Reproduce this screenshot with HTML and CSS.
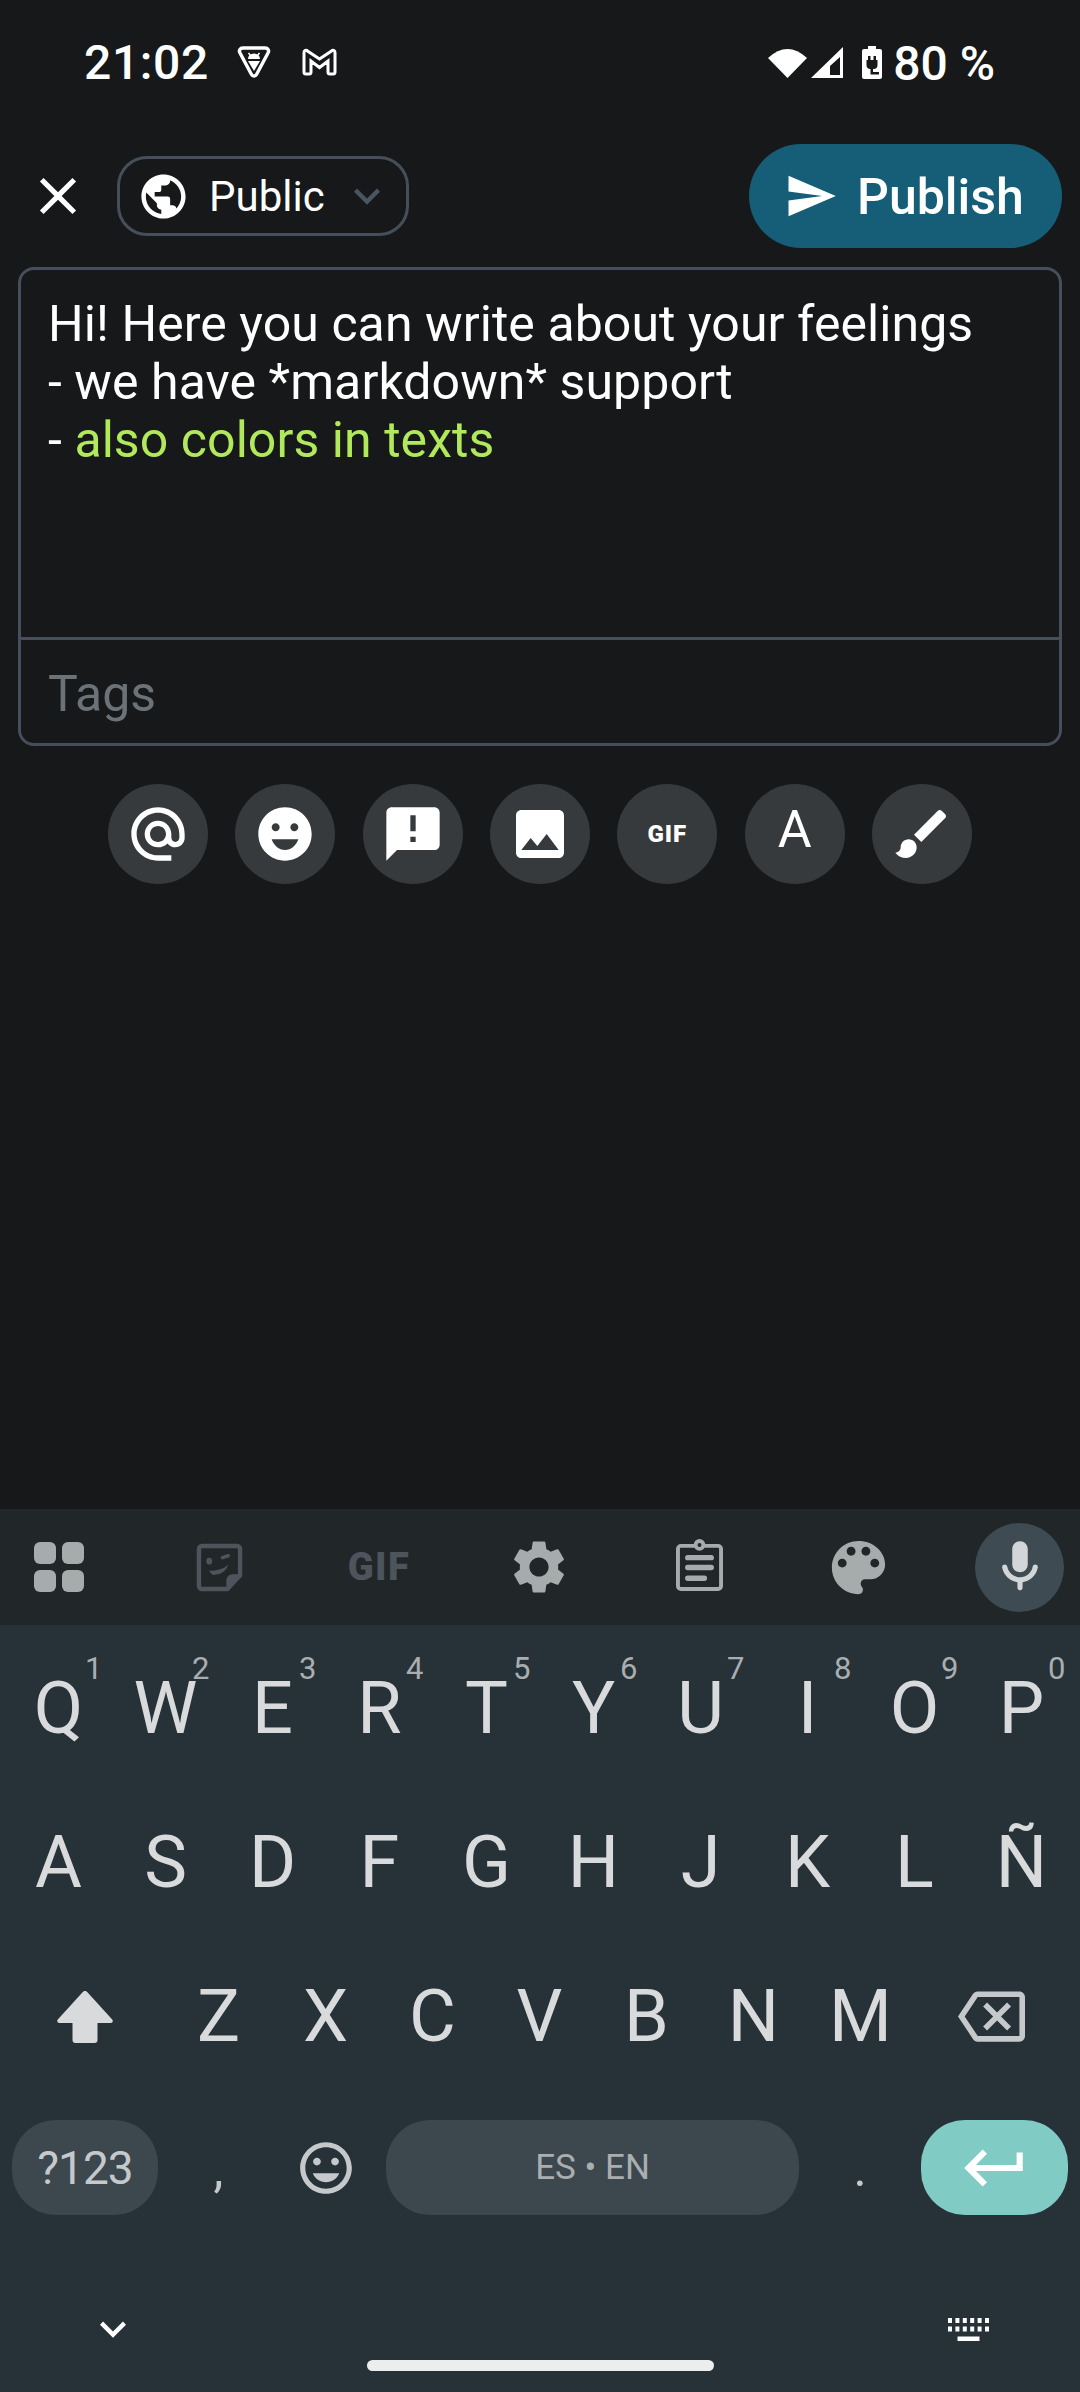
FILE: index.html
```html
<!DOCTYPE html>
<html lang="en">
<head>
  <meta charset="UTF-8" />
  <meta name="viewport" content="width=device-width, initial-scale=1.0" />
  <title>New post</title>
  <link rel="stylesheet" href="styles.css">
</head>
<body>
  <div class="screen">
    <main class="compose">
      <div class="status-bar">
        <span class="clock">21:02</span>
        <svg class="st-shield" viewBox="0 0 34 34"><path d="M6 3H28C31 3 32.500 5.500 31 8L19.500 29.500C18.500 31.500 15.500 31.500 14.500 29.500L3 8C1.500 5.500 3 3 6 3Z" fill="none" stroke="#fff" stroke-width="3.400" stroke-linejoin="round"/><path d="M11 14a6 5.500 0 0 1 12 0ZM11 16H23L17 26Z" fill="#fff"/><path d="M11.500 8l2 2.500M22.500 8l-2 2.500" stroke="#fff" stroke-width="1.500"/></svg>
        <svg class="st-mail" viewBox="0 0 35 28"><path d="M2 4.500a2 2 0 0 1 3.500-1.500L17.500 11 29.500 3a2 2 0 0 1 3.500 1.500V24a2 2 0 0 1-2 2H28a2 2 0 0 1-2-2V13l-8.500 6.500L9 13V24a2 2 0 0 1-2 2H4a2 2 0 0 1-2-2Z" fill="none" stroke="#fff" stroke-width="3"/></svg>
        <span class="status-spacer"></span>
        <svg class="st-wifi" viewBox="0 0 39 31"><path d="M0 11Q19.500-7 39 11L19.500 31Z" fill="#fff"/></svg>
        <svg class="st-signal" viewBox="0 0 32 31"><path d="M32 0V31H0ZM29 10 19 19V28H29Z" fill="#fff" fill-rule="evenodd"/></svg>
        <svg class="st-battery" viewBox="0 0 20 33"><path d="M6 0H14V3H18a2 2 0 0 1 2 2V31a2 2 0 0 1-2 2H2a2 2 0 0 1-2-2V5a2 2 0 0 1 2-2H6Z" fill="#fff"/><path d="M6 10H8.500V14H11.500V10H14V14H15.500V19a4 4 0 0 1-4 4H11V26H17V28.500H8.500V23a4 4 0 0 1-4-4V14H6Z" fill="#16181a"/></svg>
        <span class="battery-text">80 %</span>
      </div>

      <div class="top-bar">
        <svg class="close-icon" viewBox="0 0 24 24"><path d="M19 6.410L17.590 5 12 10.590 6.410 5 5 6.410 10.590 12 5 17.590 6.410 19 12 13.410 17.590 19 19 17.590 13.410 12z"/></svg>
        <div class="visibility">
          <svg class="globe-icon" viewBox="0 0 24 24"><path d="M12 2C6.480 2 2 6.480 2 12s4.480 10 10 10 10-4.480 10-10S17.520 2 12 2zm-1 17.930c-3.950-.490-7-3.850-7-7.930 0-.620.080-1.210.210-1.790L9 15v1c0 1.100.900 2 2 2v1.930zm6.900-2.540c-.260-.810-1-1.390-1.900-1.390h-1v-3c0-.550-.450-1-1-1H8v-2h2c.550 0 1-.450 1-1V7h2c1.100 0 2-.900 2-2v-.410c2.930 1.190 5 4.060 5 7.410 0 2.080-.800 3.970-2.100 5.390z"/></svg>
          <span class="visibility-label">Public</span>
          <svg class="caret-icon" viewBox="0 0 24 24"><path d="M16.590 8.590L12 13.170 7.410 8.590 6 10l6 6 6-6z"/></svg>
        </div>
        <button class="publish">
          <svg class="send-icon" viewBox="0 0 24 24"><path d="M2.010 21L23 12 2.010 3 2 10l15 2-15 2z"/></svg>
          <span>Publish</span>
        </button>
      </div>

      <div class="editor">
        <div class="editor-text">
          <div>Hi! Here you can write about your feelings</div>
          <div>- we have *markdown* support</div>
          <div>- <span class="lime">also colors in texts</span></div>
        </div>
        <div class="editor-tags">Tags</div>
      </div>

      <div class="tools">
        <div class="tool"><svg viewBox="0 0 24 24"><path d="M12 2C6.480 2 2 6.480 2 12s4.480 10 10 10h5v-2h-5c-4.340 0-8-3.660-8-8s3.660-8 8-8 8 3.660 8 8v1.430c0 .790-.710 1.570-1.500 1.570s-1.500-.780-1.500-1.570V12c0-2.760-2.240-5-5-5s-5 2.240-5 5 2.240 5 5 5c1.380 0 2.640-.560 3.540-1.470.650.890 1.770 1.470 2.960 1.470 1.970 0 3.500-1.600 3.500-3.570V12c0-5.520-4.480-10-10-10zm0 13c-1.660 0-3-1.340-3-3s1.340-3 3-3 3 1.340 3 3-1.340 3-3 3z"/></svg></div>
        <div class="tool"><svg viewBox="0 0 24 24"><path d="M12 2C6.470 2 2 6.470 2 12s4.470 10 10 10 10-4.470 10-10S17.530 2 12 2zM8.500 8c.830 0 1.500.670 1.500 1.500S9.330 11 8.500 11 7 10.330 7 9.500 7.670 8 8.500 8zM12 18c-2.280 0-4.220-1.660-5-4h10c-.780 2.340-2.720 4-5 4zm3.500-7c-.830 0-1.500-.670-1.500-1.500S14.670 8 15.500 8s1.500.670 1.500 1.500-.670 1.500-1.500 1.500z"/></svg></div>
        <div class="tool"><svg viewBox="0 0 24 24"><path d="M20 2H4c-1.100 0-1.990.900-1.990 2L2 22l4-4h14c1.100 0 2-.900 2-2V4c0-1.100-.900-2-2-2zm-7 9h-2V5h2v6zm0 4h-2v-2h2v2z"/></svg></div>
        <div class="tool"><svg viewBox="0 0 24 24"><path d="M21 19V5c0-1.100-.900-2-2-2H5c-1.100 0-2 .900-2 2v14c0 1.100.900 2 2 2h14c1.100 0 2-.900 2-2zM8.500 13.500l2.500 3.010L14.500 12l4.500 6H5l3.500-4.500z"/></svg></div>
        <div class="tool"><span class="tool-gif">GIF</span></div>
        <div class="tool"><span class="tool-letter">A</span></div>
        <div class="tool"><svg viewBox="0 0 24 24"><path d="M7 14c-1.660 0-3 1.340-3 3 0 1.310-1.160 2-2 2 .920 1.220 2.490 2 4 2 2.210 0 4-1.790 4-4 0-1.660-1.340-3-3-3zm13.710-9.370l-1.340-1.340c-.390-.390-1.020-.390-1.410 0L9 12.250 11.750 15l8.960-8.960c.390-.390.390-1.020 0-1.410z"/></svg></div>
      </div>
    </main>

    <section class="keyboard">
      <div class="kb-toolbar">
        <div class="kb-tool">
          <svg class="ic-grid" viewBox="0 0 50 50"><rect width="22" height="22" rx="6"/><rect x="28" width="22" height="22" rx="6"/><rect y="28" width="22" height="22" rx="6"/><rect x="28" y="28" width="22" height="22" rx="6"/></svg>
        </div>
        <div class="kb-tool">
          <svg class="ic-sticker" viewBox="0 0 48 50"><path d="M6 3H42a3 3 0 0 1 3 3V33L32 47H6a3 3 0 0 1-3-3V6a3 3 0 0 1 3-3Z" fill="none" stroke="#4d545c" stroke-width="4.500"/><path d="M45 32H37a6 6 0 0 0-6 6V47Z" fill="#4d545c"/><ellipse cx="13.500" cy="18.500" rx="3" ry="3.500" fill="#4d545c"/><path d="M27 15 33 13" stroke="#4d545c" stroke-width="3.500" stroke-linecap="round"/><path d="M13 28C22 29 29 26 33 22 31 30 22 34 16 32Z" fill="#4d545c"/></svg>
        </div>
        <div class="kb-tool"><span class="kb-gif">GIF</span></div>
        <div class="kb-tool">
          <svg class="ic-gear" viewBox="0 0 24 24"><path d="M19.140 12.940c.040-.300.060-.610.060-.940 0-.320-.020-.640-.070-.940l2.030-1.580c.180-.140.230-.410.120-.610l-1.920-3.320c-.120-.220-.370-.290-.590-.220l-2.390.960c-.500-.380-1.030-.700-1.620-.940l-.360-2.540c-.040-.240-.240-.410-.480-.410h-3.840c-.240 0-.430.170-.470.410l-.360 2.540c-.590.240-1.130.570-1.620.940l-2.390-.96c-.220-.080-.470 0-.590.220L2.740 8.870c-.120.210-.080.470.120.610l2.030 1.580c-.050.300-.090.630-.090.940s.020.640.07.940l-2.030 1.580c-.180.140-.230.410-.12.610l1.920 3.320c.120.220.370.290.590.220l2.390-.96c.500.380 1.030.700 1.620.940l.360 2.540c.050.240.240.410.480.410h3.840c.240 0 .440-.170.470-.410l.360-2.540c.590-.240 1.130-.560 1.620-.940l2.390.96c.220.080.470 0 .590-.220l1.920-3.320c.120-.220.070-.470-.120-.610l-2.010-1.580zM12 15.600c-1.980 0-3.600-1.620-3.600-3.600s1.620-3.600 3.600-3.600 3.600 1.620 3.600 3.600-1.620 3.600-3.600 3.600z"/></svg>
        </div>
        <div class="kb-tool">
          <svg class="ic-clip" viewBox="0 0 48 53"><rect x="2" y="7" width="44" height="44" rx="3" fill="none" stroke="#a6abac" stroke-width="4"/><circle cx="24" cy="6" r="6" fill="#a6abac"/><circle cx="24" cy="6" r="2" fill="#212629"/><path d="M12 19H36M12 29H36M12 40H29" stroke="#a6abac" stroke-width="5.500" stroke-linecap="round"/></svg>
        </div>
        <div class="kb-tool">
          <svg class="ic-palette" viewBox="0 0 24 24"><path d="M12 3c-4.970 0-9 4.030-9 9s4.030 9 9 9c.830 0 1.500-.670 1.500-1.500 0-.390-.150-.740-.390-1.010-.230-.260-.380-.610-.380-.990 0-.830.670-1.500 1.500-1.500H16c2.760 0 5-2.240 5-5 0-4.420-4.030-8-9-8zm-5.500 9c-.830 0-1.500-.670-1.500-1.500S5.670 9 6.500 9 8 9.670 8 10.500 7.330 12 6.500 12zm3-4C8.670 8 8 7.330 8 6.500S8.670 5 9.500 5s1.500.670 1.500 1.500S10.330 8 9.500 8zm5 0c-.830 0-1.500-.670-1.500-1.500S13.670 5 14.500 5s1.500.670 1.500 1.500S15.330 8 14.500 8zm3 4c-.830 0-1.500-.670-1.500-1.500S16.670 9 17.500 9s1.500.670 1.500 1.500-.670 1.500-1.500 1.500z"/></svg>
        </div>
        <div class="kb-tool kb-mic">
          <svg class="ic-mic" viewBox="0 0 24 24"><path d="M12 14c1.660 0 3-1.340 3-3V5c0-1.660-1.340-3-3-3S9 3.340 9 5v6c0 1.660 1.340 3 3 3zm5.910-3c-.490 0-.900.360-.980.850C16.520 14.200 14.470 16 12 16s-4.520-1.800-4.930-4.150c-.080-.490-.490-.850-.980-.850-.610 0-1.090.540-1 1.140.490 3 2.890 5.350 5.910 5.780V20c0 .550.450 1 1 1s1-.450 1-1v-2.080c3.020-.430 5.420-2.780 5.910-5.780.100-.600-.390-1.140-1-1.140z"/></svg>
        </div>
      </div>

      <div class="kb-row">
        <div class="key">Q<sup class="hint">1</sup></div>
        <div class="key">W<sup class="hint">2</sup></div>
        <div class="key">E<sup class="hint">3</sup></div>
        <div class="key">R<sup class="hint">4</sup></div>
        <div class="key">T<sup class="hint">5</sup></div>
        <div class="key">Y<sup class="hint">6</sup></div>
        <div class="key">U<sup class="hint">7</sup></div>
        <div class="key">I<sup class="hint">8</sup></div>
        <div class="key">O<sup class="hint">9</sup></div>
        <div class="key">P<sup class="hint">0</sup></div>
      </div>
      <div class="kb-row">
        <div class="key">A</div>
        <div class="key">S</div>
        <div class="key">D</div>
        <div class="key">F</div>
        <div class="key">G</div>
        <div class="key">H</div>
        <div class="key">J</div>
        <div class="key">K</div>
        <div class="key">L</div>
        <div class="key">Ñ</div>
      </div>
      <div class="kb-row">
        <div class="key key-wide">
          <svg class="ic-shift" viewBox="0 0 56 52"><path d="M25.800 1 .800 28.500C-.500 30 .500 32 2.500 32H15.500V49a3 3 0 0 0 3 3H37.500a3 3 0 0 0 3-3V32H53.500c2 0 3-2 1.700-3.500L30.200 1a3 3 0 0 0-4.400 0Z"/></svg>
        </div>
        <div class="key">Z</div>
        <div class="key">X</div>
        <div class="key">C</div>
        <div class="key">V</div>
        <div class="key">B</div>
        <div class="key">N</div>
        <div class="key">M</div>
        <div class="key key-wide">
          <svg class="ic-back" viewBox="0 0 24 24"><path d="M22 3H7c-.690 0-1.230.350-1.590.880L0 12l5.410 8.110c.360.530.900.890 1.590.890h15c1.100 0 2-.900 2-2V5c0-1.100-.900-2-2-2zm0 16H7.070L2.400 12l4.660-7H22v14zM10.410 17L14 13.410 17.590 17 19 15.590 15.410 12 19 8.410 17.590 7 14 10.590 10.410 7 9 8.410 12.590 12 9 15.590z"/></svg>
        </div>
      </div>
      <div class="kb-row kb-bottom">
        <div class="pill pill-sym">?123</div>
        <div class="key key-punct">,</div>
        <div class="key key-emoji">
          <svg class="ic-emoji" viewBox="0 0 24 24"><path d="M11.990 2C6.470 2 2 6.480 2 12s4.470 10 9.990 10C17.520 22 22 17.520 22 12S17.520 2 11.990 2zM12 20c-4.420 0-8-3.580-8-8s3.580-8 8-8 8 3.580 8 8-3.580 8-8 8zm3.500-9c.830 0 1.500-.670 1.500-1.500S16.330 8 15.500 8 14 8.670 14 9.500s.670 1.500 1.500 1.500zm-7 0c.830 0 1.500-.670 1.500-1.500S9.330 8 8.500 8 7 8.670 7 9.500 7.670 11 8.500 11zm3.500 6.500c2.330 0 4.310-1.460 5.110-3.500H6.890c.800 2.040 2.780 3.500 5.110 3.500z"/></svg>
        </div>
        <div class="pill pill-space">ES • EN</div>
        <div class="key key-punct key-period">.</div>
        <div class="pill pill-enter">
          <svg class="ic-enter" viewBox="0 0 24 24"><path d="M19 7v4H5.830l3.580-3.590L8 6l-6 6 6 6 1.410-1.410L5.830 13H21V7z"/></svg>
        </div>
      </div>

      <div class="kb-nav">
        <div class="kb-nav-icons">
          <svg class="ic-hide" viewBox="0 0 24 24"><path d="M16.590 8.590L12 13.170 7.410 8.590 6 10l6 6 6-6z"/></svg>
          <svg class="ic-switch" viewBox="0 0 41 23"><path d="M0 0H4V5H0ZM7.400 0H11.400V5H7.400ZM14.800 0H18.800V5H14.800ZM22.200 0H26.200V5H22.200ZM29.600 0H33.600V5H29.600ZM37 0H41V5H37ZM0 8.500H4V13.500H0ZM7.400 8.500H11.400V13.500H7.400ZM14.800 8.500H18.800V13.500H14.800ZM22.200 8.500H26.200V13.500H22.200ZM29.600 8.500H33.600V13.500H29.600ZM37 8.500H41V13.500H37ZM9.500 18.500H31.500V23H9.500Z"/></svg>
        </div>
        <div class="home-pill"></div>
      </div>
    </section>
  </div>
</body>
</html>
```

FILE: styles.css
```css
html, body {
  margin: 0;
  padding: 0;
  background-color: #16181a;
}

body {
  font-family: Roboto, "Liberation Sans", sans-serif;
  color: #fff;
}

svg {
  display: block;
  flex-shrink: 0;
}

.screen {
  width: 1080px;
  height: 2392px;
  display: flex;
  flex-direction: column;
  overflow: hidden;
}

.compose {
  flex: 1;
  display: flex;
  flex-direction: column;
}

/* status bar */

.status-bar {
  height: 124px;
  box-sizing: border-box;
  padding: 0 85px 0 84px;
  display: flex;
  align-items: center;
}

.clock {
  font-size: 48px;
  font-weight: 500;
  letter-spacing: 0.6px;
}

.st-shield {
  width: 34px;
  height: 34px;
  margin-left: 28px;
}

.st-mail {
  width: 35px;
  height: 28px;
  margin-left: 31px;
}

.status-spacer {
  flex: 1;
}

.st-wifi {
  width: 39px;
  height: 31px;
}

.st-signal {
  width: 32px;
  height: 31px;
  margin-left: 4px;
}

.st-battery {
  width: 20px;
  height: 33px;
  margin-left: 19px;
}

.battery-text {
  font-size: 48px;
  font-weight: 500;
  margin: 2px 0 0 11px;
}

/* top bar */

.top-bar {
  margin-top: 20px;
  height: 104px;
  padding: 0 18px 0 27px;
  display: flex;
  align-items: center;
}

.close-icon {
  width: 62px;
  height: 62px;
  fill: #fff;
}

.visibility {
  margin-left: 28px;
  width: 292px;
  height: 80px;
  box-sizing: border-box;
  border: 3px solid #464f59;
  border-radius: 30px;
  display: flex;
  align-items: center;
  padding-left: 17px;
}

.globe-icon {
  width: 53px;
  height: 53px;
  fill: #fff;
}

.visibility-label {
  font-size: 42px;
  margin-left: 19px;
}

.caret-icon {
  width: 52px;
  height: 52px;
  fill: #4a5561;
  margin-left: 16px;
}

.publish {
  margin-left: auto;
  width: 313px;
  height: 104px;
  border: 0;
  border-radius: 52px;
  background-color: #165e78;
  color: #fff;
  font-family: inherit;
  font-size: 50px;
  font-weight: 500;
  display: flex;
  align-items: center;
  padding: 0 0 0 35px;
}

.publish span {
  margin-top: 2px;
}

.send-icon {
  width: 54px;
  height: 54px;
  fill: #fff;
  margin-right: 19px;
}

/* editor */

.editor {
  margin: 19px 18px 0 18px;
  height: 479px;
  box-sizing: border-box;
  border: 3px solid #464f59;
  border-radius: 16px;
  display: flex;
  flex-direction: column;
}

.editor-text {
  height: 370px;
  box-sizing: border-box;
  padding: 25px 27px 0 27px;
  font-size: 50px;
  line-height: 58px;
  letter-spacing: 0.07px;
  border-bottom: 3px solid #464f59;
}

.lime {
  color: #b2e95c;
}

.editor-tags {
  flex: 1;
  padding: 4px 27px 0 27px;
  display: flex;
  align-items: center;
  font-size: 50px;
  color: #6b7278;
}

/* buttons under the editor */

.tools {
  margin-top: 38px;
  display: flex;
  justify-content: center;
  gap: 27.3px;
}

.tool {
  width: 100px;
  height: 100px;
  border-radius: 50%;
  background-color: #363a3c;
  display: flex;
  align-items: center;
  justify-content: center;
}

.tool svg {
  width: 64px;
  height: 64px;
  fill: #fff;
}

.tool-gif {
  font-size: 24px;
  font-weight: 900;
  letter-spacing: 1px;
}

.tool-letter {
  font-size: 52px;
  margin-top: -9px;
}

/* keyboard */

.keyboard {
  background-color: #273138;
  height: 883px;
}

.kb-toolbar {
  height: 116px;
  box-sizing: border-box;
  background-color: #212629;
  padding: 0 16px 0 15px;
  display: flex;
  align-items: center;
  justify-content: space-between;
  margin-bottom: 5px;
}

.kb-tool {
  width: 88px;
  height: 88px;
  display: flex;
  align-items: center;
  justify-content: center;
}

.kb-mic {
  width: 89px;
  height: 89px;
  border-radius: 50%;
  background-color: #3f4b52;
}

.ic-grid {
  width: 50px;
  height: 50px;
  fill: #a6abac;
}

.ic-sticker {
  width: 47px;
  height: 49px;
}

.kb-gif {
  font-size: 38px;
  font-weight: 900;
  letter-spacing: 1.5px;
  color: #4d545c;
}

.ic-gear {
  width: 64px;
  height: 64px;
  fill: #a6abac;
}

.ic-clip {
  width: 47px;
  height: 52px;
  margin-top: -4px;
}

.ic-palette {
  width: 71px;
  height: 71px;
  fill: #a6abac;
  margin-left: -2px;
}

.ic-mic {
  width: 62px;
  height: 62px;
  fill: #d3d6d8;
}

.kb-row {
  height: 154px;
  padding: 0 5px;
  display: flex;
}

.key {
  width: 107px;
  box-sizing: border-box;
  padding-top: 3px;
  position: relative;
  display: flex;
  align-items: center;
  justify-content: center;
  font-size: 72px;
  color: #d8dadc;
}

.hint {
  position: absolute;
  left: 80px;
  top: 23px;
  font-size: 31px;
  line-height: 31px;
  color: #a9aeb0;
}

.key-wide {
  width: 160px;
}

.ic-shift {
  width: 56px;
  height: 52px;
  fill: #d8dadc;
}

.ic-back {
  width: 67px;
  height: 67px;
  fill: #c5c9cb;
  margin-left: -6px;
}

.kb-bottom {
  height: 151px;
  padding: 28px 12px 0 12px;
  box-sizing: border-box;
}

.kb-bottom .key {
  height: 95px;
  padding-top: 0;
}

.pill {
  height: 95px;
  border-radius: 44px;
  background-color: #3c474e;
  display: flex;
  align-items: center;
  justify-content: center;
  color: #c5c9cb;
}

.pill-sym {
  width: 146px;
  font-size: 46px;
  letter-spacing: -1px;
}

.kb-bottom .key-punct {
  margin-left: 7px;
  padding-top: 3px;
  font-size: 50px;
  color: #c5c9cb;
}

.key-period {
  width: 108px;
}

.ic-emoji {
  width: 62px;
  height: 62px;
  fill: #c5c9cb;
}

.pill-space {
  width: 413px;
  margin-left: 7px;
  font-size: 35px;
  color: #a9aeb0;
}

.pill-enter {
  width: 147px;
  margin-left: 7px;
  background-color: #80cbc4;
}

.ic-enter {
  width: 74px;
  height: 74px;
  fill: #fff;
}

.kb-nav-icons {
  height: 52px;
  padding: 60px 86px 0 87px;
  display: flex;
  align-items: center;
  justify-content: space-between;
}

.ic-hide {
  width: 52px;
  height: 52px;
  fill: #fff;
}

.ic-switch {
  width: 41px;
  height: 23px;
  fill: #fff;
  margin-right: 5px;
}

.home-pill {
  width: 347px;
  height: 11px;
  margin: 5px auto 0 auto;
  border-radius: 6px;
  background-color: #eceeee;
}
```
